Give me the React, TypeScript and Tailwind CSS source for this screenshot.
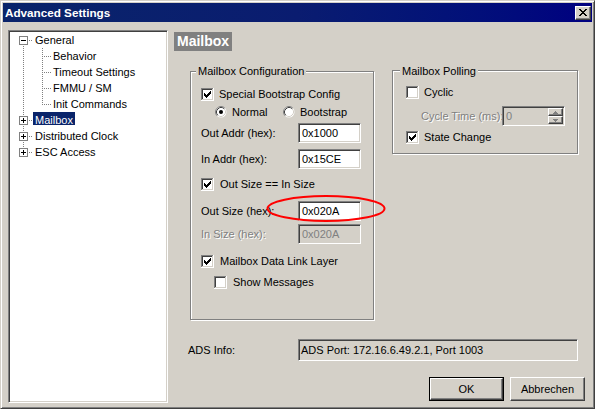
import React from "react";

const sunken =
  "border border-t-[#808080] border-l-[#808080] border-r-white border-b-white shadow-[inset_1px_1px_0_#404040,inset_-1px_-1px_0_#d4d0c8]";
const raised =
  "border border-t-white border-l-white border-r-[#404040] border-b-[#404040] shadow-[inset_-1px_-1px_0_#808080]";
const etched =
  "border border-[#808080] shadow-[inset_1px_1px_0_#ffffff,1px_1px_0_#ffffff]";
const disabledText = "text-[#808080] [text-shadow:1px_1px_0_#ffffff]";

function CheckBox({ checked }: { checked?: boolean }) {
  const cols = [
    [3, 5],
    [4, 6],
    [5, 7],
    [6, 6],
    [7, 5],
    [8, 4],
    [9, 3],
  ];
  return (
    <svg width="13" height="13" viewBox="0 0 13 13" shapeRendering="crispEdges" className="shrink-0">
      <rect x="0" y="0" width="13" height="13" fill="#ffffff" />
      <rect x="0" y="0" width="12" height="1" fill="#808080" />
      <rect x="0" y="0" width="1" height="12" fill="#808080" />
      <rect x="1" y="1" width="10" height="1" fill="#404040" />
      <rect x="1" y="1" width="1" height="10" fill="#404040" />
      <rect x="1" y="11" width="11" height="1" fill="#d4d0c8" />
      <rect x="11" y="1" width="1" height="11" fill="#d4d0c8" />
      {checked &&
        cols.map(([x, y]) => <rect key={x} x={x} y={y} width="1" height="3" fill="#000000" />)}
    </svg>
  );
}

function Radio({ checked }: { checked?: boolean }) {
  return (
    <svg width="12" height="12" viewBox="0 0 12 12" className="shrink-0">
      <circle cx="6" cy="6" r="5.5" fill="#ffffff" />
      <path d="M2.11 9.89 A5.5 5.5 0 0 1 9.89 2.11" fill="none" stroke="#808080" strokeWidth="1" />
      <path d="M2.82 9.18 A4.5 4.5 0 0 1 9.18 2.82" fill="none" stroke="#404040" strokeWidth="1" />
      <path d="M9.18 2.82 A4.5 4.5 0 0 1 2.82 9.18" fill="none" stroke="#d4d0c8" strokeWidth="1" />
      {checked && <circle cx="6" cy="6" r="2" fill="#000000" />}
    </svg>
  );
}

type Row = {
  label: string;
  kind: "root" | "child";
  sign?: "minus" | "plus";
  first?: boolean;
  last?: boolean;
  lastChild?: boolean;
  selected?: boolean;
};

const rows: Row[] = [
  { label: "General", kind: "root", sign: "minus", first: true },
  { label: "Behavior", kind: "child" },
  { label: "Timeout Settings", kind: "child" },
  { label: "FMMU / SM", kind: "child" },
  { label: "Init Commands", kind: "child", lastChild: true },
  { label: "Mailbox", kind: "root", sign: "plus", selected: true },
  { label: "Distributed Clock", kind: "root", sign: "plus" },
  { label: "ESC Access", kind: "root", sign: "plus", last: true },
];

function RootCell({ row }: { row: Row }) {
  return (
    <svg width="23" height="16" viewBox="0 0 23 16" shapeRendering="crispEdges" className="shrink-0">
      {!row.first && (
        <path d="M13.5 0 V4" stroke="#808080" strokeWidth="1" strokeDasharray="1 1" />
      )}
      {!row.last && (
        <path d="M13.5 14 V16" stroke="#808080" strokeWidth="1" strokeDasharray="1 1" />
      )}
      <path d="M19 8.5 H23" stroke="#808080" strokeWidth="1" strokeDasharray="1 1" />
      <rect x="9.5" y="4.5" width="8" height="8" fill="#ffffff" stroke="#808080" strokeWidth="1" />
      <rect x="11" y="8" width="5" height="1" fill="#000000" />
      {row.sign === "plus" && <rect x="13" y="6" width="1" height="5" fill="#000000" />}
    </svg>
  );
}

function ChildCells({ row }: { row: Row }) {
  return (
    <>
      <svg width="23" height="16" viewBox="0 0 23 16" shapeRendering="crispEdges" className="shrink-0">
        <path d="M13.5 0 V16" stroke="#808080" strokeWidth="1" strokeDasharray="1 1" />
      </svg>
      <svg width="18" height="16" viewBox="0 0 18 16" shapeRendering="crispEdges" className="shrink-0">
        <path
          d={row.lastChild ? "M9.5 0 V9" : "M9.5 0 V16"}
          stroke="#808080"
          strokeWidth="1"
          strokeDasharray="1 1"
        />
        <path d="M11 8.5 H18" stroke="#808080" strokeWidth="1" strokeDasharray="1 1" />
      </svg>
    </>
  );
}

function Tree() {
  return (
    <div className={`w-[160px] h-[373px] bg-white ${sunken} shrink-0`}>
      <div className="flex flex-col pl-[1px] pt-[1px]">
        {rows.map((r) => (
          <div key={r.label} className="flex h-[16px]">
            {r.kind === "root" ? <RootCell row={r} /> : <ChildCells row={r} />}
            <span
              className={`self-start h-[13px] leading-[16px] px-[2px] whitespace-nowrap ${
                r.selected ? "bg-[#0a246a] text-white" : "text-black"
              }`}
            >
              {r.label}
            </span>
          </div>
        ))}
      </div>
    </div>
  );
}

function TextBox({ value, disabled, w }: { value: string; disabled?: boolean; w: string }) {
  return (
    <div
      className={`${w} h-[20px] shrink-0 flex items-center pl-[3px] ${sunken} ${
        disabled ? "bg-[#d4d0c8] text-[#808080]" : "bg-white text-black"
      }`}
    >
      {value}
    </div>
  );
}

function CloseGlyph() {
  const rowsX: number[][] = [
    [0, 1, 6, 7],
    [1, 2, 5, 6],
    [2, 3, 4, 5],
    [3, 4],
    [2, 3, 4, 5],
    [1, 2, 5, 6],
    [0, 1, 6, 7],
  ];
  return (
    <svg width="8" height="7" viewBox="0 0 8 7" shapeRendering="crispEdges">
      {rowsX.map((xs, y) =>
        xs.map((x) => <rect key={`${x}-${y}`} x={x} y={y} width="1" height="1" fill="#000000" />)
      )}
    </svg>
  );
}

function SpinArrow({ up }: { up?: boolean }) {
  return (
    <svg width="5" height="3" viewBox="0 0 5 3" shapeRendering="crispEdges">
      {up ? (
        <>
          <rect x="2" y="0" width="1" height="1" fill="#808080" />
          <rect x="1" y="1" width="3" height="1" fill="#808080" />
          <rect x="0" y="2" width="5" height="1" fill="#808080" />
        </>
      ) : (
        <>
          <rect x="0" y="0" width="5" height="1" fill="#808080" />
          <rect x="1" y="1" width="3" height="1" fill="#808080" />
          <rect x="2" y="2" width="1" height="1" fill="#808080" />
        </>
      )}
    </svg>
  );
}

export default function App() {
  return (
    <div className="w-[595px] h-[409px] overflow-hidden bg-[#d4d0c8] font-['Liberation_Sans',Arial,sans-serif] text-[11px] text-black border border-t-[#d4d0c8] border-l-[#d4d0c8] border-r-[#404040] border-b-[#404040] shadow-[inset_1px_1px_0_#ffffff,inset_-1px_-1px_0_#808080] p-[2px] flex flex-col">
      {/* Title bar */}
      <div className="h-[19px] shrink-0 flex items-center justify-between pl-[2px] pr-[1px] bg-gradient-to-r from-[#0a246a] via-[#0a1c70] to-[#000080]">
        <span className="text-white font-bold text-[11.7px] leading-none">Advanced Settings</span>
        <button className={`w-[16px] h-[14px] flex items-center justify-center bg-[#d4d0c8] ${raised}`}>
          <CloseGlyph />
        </button>
      </div>

      {/* Body */}
      <div className="flex pt-[8px] pl-[5px]">
        <Tree />

        <div className="ml-[6px] w-[417px] flex flex-col">
          <div className="mt-[2px] h-[19px] w-fit px-[3px] bg-[#808080] text-white font-bold text-[14px] flex items-center">
            Mailbox
          </div>

          <div className="mt-[19px] flex items-start">
            {/* Mailbox Configuration */}
            <div className={`relative ml-[16px] mt-[1px] w-[184px] h-[249px] ${etched} flex flex-col`}>
              <span className="-mt-[7px] ml-[5px] px-[2px] w-fit h-[13px] leading-[13px] bg-[#d4d0c8]">
                Mailbox Configuration
              </span>

              <div className="mt-[10px] pl-[10px] flex items-center gap-[5px] h-[13px]">
                <CheckBox checked />
                <span>Special Bootstrap Config</span>
              </div>

              <div className="mt-[5px] pl-[24px] flex items-center h-[12px]">
                <div className="w-[68px] flex items-center gap-[5px]">
                  <Radio checked />
                  <span>Normal</span>
                </div>
                <div className="flex items-center gap-[5px]">
                  <Radio />
                  <span>Bootstrap</span>
                </div>
              </div>

              <div className="mt-[5px] pl-[10px] flex items-center h-[20px]">
                <span className="w-[97px] shrink-0">Out Addr (hex):</span>
                <TextBox value="0x1000" w="w-[63px]" />
              </div>

              <div className="mt-[6px] pl-[10px] flex items-center h-[20px]">
                <span className="w-[97px] shrink-0">In Addr (hex):</span>
                <TextBox value="0x15CE" w="w-[63px]" />
              </div>

              <div className="mt-[9px] pl-[10px] flex items-center gap-[6px] h-[13px]">
                <CheckBox checked />
                <span>Out Size == In Size</span>
              </div>

              <div className="mt-[10px] pl-[10px] flex items-center h-[20px]">
                <span className="w-[97px] shrink-0">Out Size (hex):</span>
                <TextBox value="0x020A" w="w-[63px]" />
              </div>

              <div className="mt-[3px] pl-[10px] flex items-center h-[20px]">
                <span className={`w-[97px] shrink-0 ${disabledText}`}>In Size (hex):</span>
                <TextBox value="0x020A" disabled w="w-[63px]" />
              </div>

              <div className="mt-[11px] pl-[10px] flex items-center gap-[6px] h-[13px]">
                <CheckBox checked />
                <span>Mailbox Data Link Layer</span>
              </div>

              <div className="mt-[8px] pl-[23px] flex items-center gap-[6px] h-[13px]">
                <CheckBox />
                <span>Show Messages</span>
              </div>

              <svg
                className="absolute left-[75px] top-[123px] pointer-events-none"
                width="122"
                height="29"
                viewBox="0 0 122 29"
              >
                <ellipse cx="60" cy="13.5" rx="58.5" ry="12.5" fill="none" stroke="#ff0000" strokeWidth="2" />
              </svg>
            </div>

            {/* Mailbox Polling */}
            <div className={`ml-[18px] w-[186px] h-[84px] ${etched} flex flex-col`}>
              <span className="-mt-[6px] ml-[7px] px-[2px] w-fit h-[13px] leading-[13px] bg-[#d4d0c8]">
                Mailbox Polling
              </span>

              <div className="mt-[8px] pl-[13px] flex items-center gap-[5px] h-[13px]">
                <CheckBox />
                <span>Cyclic</span>
              </div>

              <div className="mt-[7px] pl-[28px] flex items-center h-[20px]">
                <span className={`w-[81px] shrink-0 whitespace-nowrap ${disabledText}`}>Cycle Time (ms):</span>
                <div className={`w-[63px] h-[20px] shrink-0 flex items-center bg-[#d4d0c8] ${sunken}`}>
                  <span className="flex-1 pl-[3px] text-[#808080]">0</span>
                  <div className="w-[15px] h-[16px] mr-[1px] flex flex-col">
                    <div className={`h-[8px] flex items-center justify-center bg-[#d4d0c8] ${raised}`}>
                      <SpinArrow up />
                    </div>
                    <div className={`h-[8px] flex items-center justify-center bg-[#d4d0c8] ${raised}`}>
                      <SpinArrow />
                    </div>
                  </div>
                </div>
              </div>

              <div className="mt-[5px] pl-[13px] flex items-center gap-[5px] h-[13px]">
                <CheckBox checked />
                <span>State Change</span>
              </div>
            </div>
          </div>

          {/* ADS Info */}
          <div className="mt-[19px] flex items-center h-[22px]">
            <span className="ml-[14px] w-[110px]">ADS Info:</span>
            <div className={`w-[280px] h-[22px] flex items-center pl-[2px] bg-[#d4d0c8] ${sunken}`}>
              ADS Port: 172.16.6.49.2.1, Port 1003
            </div>
          </div>

          {/* Buttons */}
          <div className="mt-[16px] flex justify-end gap-[6px] pr-[6px]">
            <div className="w-[75px] h-[24px] border border-black">
              <button className={`w-full h-full bg-[#d4d0c8] ${raised} text-black`}>OK</button>
            </div>
            <button className={`w-[75px] h-[24px] bg-[#d4d0c8] ${raised} text-black`}>Abbrechen</button>
          </div>
        </div>
      </div>
    </div>
  );
}
